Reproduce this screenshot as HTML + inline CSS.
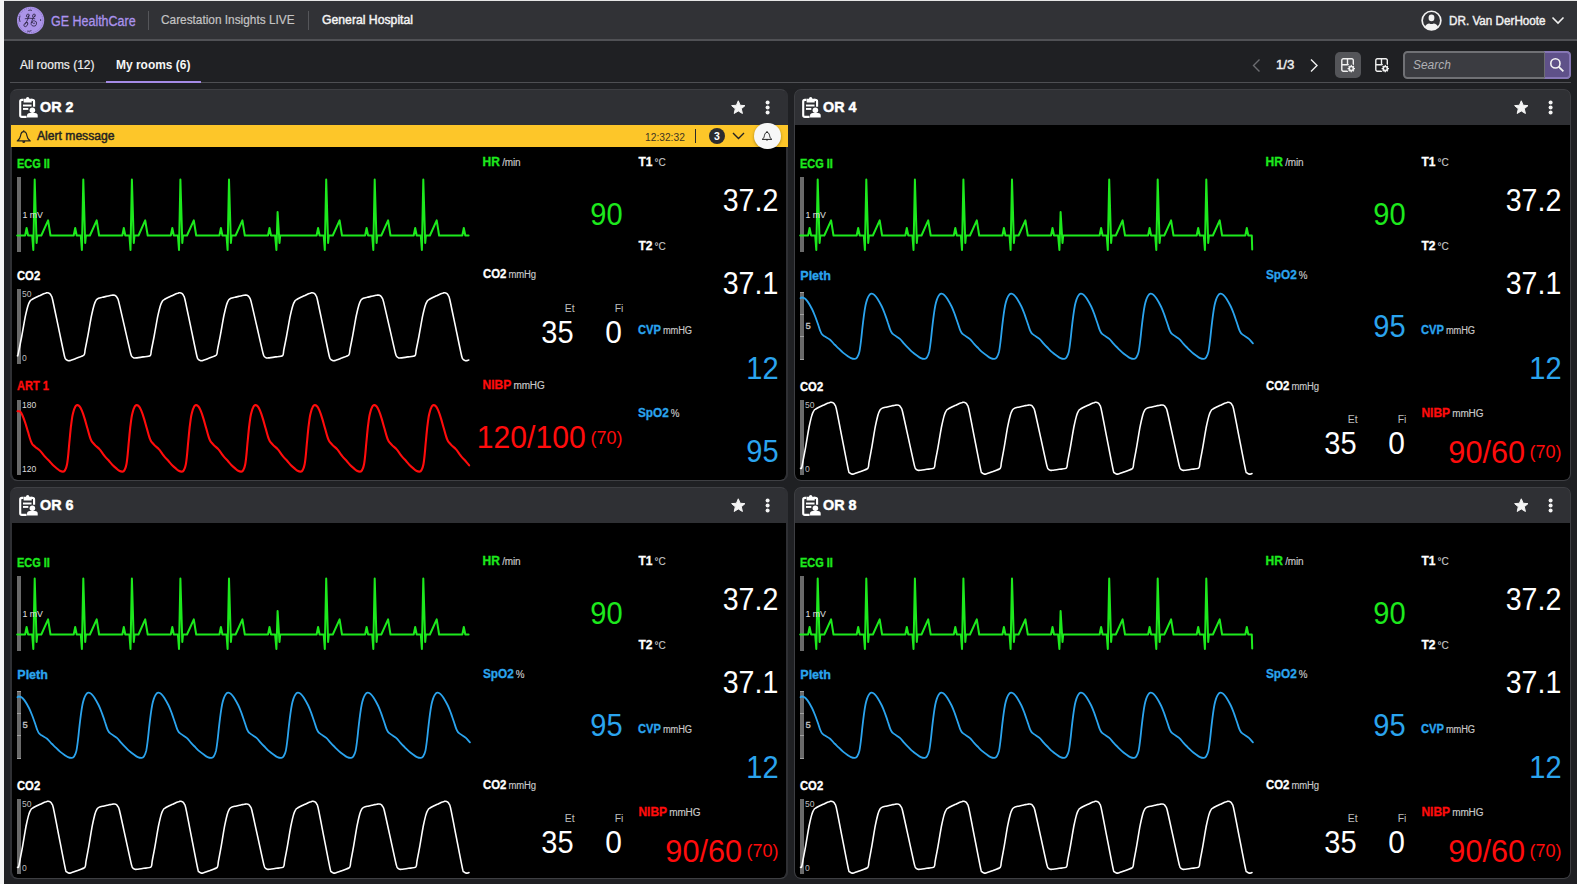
<!DOCTYPE html>
<html><head><meta charset="utf-8"><title>Carestation Insights LIVE</title><style>
*{margin:0;padding:0;box-sizing:border-box}
html,body{width:1577px;height:884px;overflow:hidden;background:#1f2023;font-family:"Liberation Sans",sans-serif}
.t{position:absolute;line-height:1;white-space:nowrap}
.u{font-weight:normal;font-size:10px;color:#c8c8c8;margin-left:2.2px;letter-spacing:-0.15px;-webkit-text-stroke:0.15px #c8c8c8}
#strip{position:absolute;left:0;top:0;width:4px;height:884px;background:#f4f4f4}
#topstrip{position:absolute;left:0;top:0;width:1577px;height:1px;background:#e6e6e6}
#hdr{position:absolute;left:4px;top:1px;width:1573px;height:40px;background:#313236;border-bottom:2px solid #505155}
.card{position:absolute;width:777px;height:392px;background:#2f3034;border-radius:7px;overflow:hidden}
.card .body{position:absolute;left:1px;top:36px;right:1px;bottom:1px;background:#000;border-radius:0 0 6px 6px}
.card .bd{position:absolute;left:0;top:0;right:0;bottom:0;border:1px solid #3e3f43;border-radius:7px}
.c1{width:778px!important}
.c1 .body{left:2px;right:2px}
.c1 .bd{border-left:2px solid #2f3034;border-right:2px solid #2f3034}
.c1 .alert{left:0.5px;right:0.5px}
.alert{position:absolute;left:1px;right:1px;top:36px;height:22px;background:#fdc629}
.badge{position:absolute;left:699px;top:39.2px;width:16px;height:16px;border-radius:50%;background:#2b2b2f;color:#fff;font-size:10.5px;font-weight:bold;text-align:center;line-height:16px}
.bellbtn{position:absolute;left:744.2px;top:33.7px;width:26.6px;height:26.6px;border-radius:50%;background:#f7f7f7;box-shadow:0 1px 3px rgba(0,0,0,.35)}
.wv{position:absolute;overflow:visible}
.sb{position:absolute;width:4px;background:#6a6a6a}
.tk{position:absolute;width:4px;height:1.2px;background:#a0a0a0}
</style></head>
<body>
<svg width="0" height="0" style="position:absolute"><defs>
<path id="wEcg" d="M0.2 58.5 8.1 58.5 9.6 51 11.1 58.5 15.2 58.5 16.3 73 17.7 2.5 19.6 66 20.3 58.5 24.3 58.5 31.1 43.3 33.5 58.5 56.7 58.5 58.2 51 59.7 58.5 63.8 58.5 64.9 73 66.3 2.5 68.2 66 68.9 58.5 72.9 58.5 79.7 43.3 82.1 58.5 105.3 58.5 106.8 51 108.3 58.5 112.4 58.5 113.5 73 114.9 2.5 116.8 66 117.5 58.5 121.5 58.5 128.2 43.3 130.7 58.5 153.8 58.5 155.3 51 156.8 58.5 160.9 58.5 162 73 163.4 2.5 165.3 66 166 58.5 170 58.5 176.8 43.3 179.2 58.5 202.4 58.5 203.9 51 205.4 58.5 209.5 58.5 210.6 73 212 2.5 213.9 66 214.6 58.5 218.6 58.5 225.4 43.3 227.8 58.5 251 58.5 252.5 51 254 58.5 258.1 58.5 259.4 73 260.6 35 262.5 66 263.2 58.5 299.6 58.5 301.1 51 302.6 58.5 306.7 58.5 307.8 73 309.2 2.5 311.1 66 311.8 58.5 315.8 58.5 322.6 43.3 325 58.5 348.1 58.5 349.6 51 351.1 58.5 355.2 58.5 356.3 73 357.7 2.5 359.6 66 360.3 58.5 364.3 58.5 371.1 43.3 373.5 58.5 396.7 58.5 398.2 51 399.7 58.5 403.8 58.5 404.9 73 406.3 2.5 408.2 66 408.9 58.5 412.9 58.5 419.7 43.3 422.1 58.5 445.3 58.5 446.8 51 448.3 58.5 451.6 58.5"/>
<path id="wEcg2" d="M0.2 58.5 8.1 58.5 9.6 51 11.1 58.5 15.2 58.5 16.3 73 17.7 2.5 19.6 66 20.3 58.5 24.3 58.5 31.1 43.3 33.5 58.5 56.7 58.5 58.2 51 59.7 58.5 63.8 58.5 64.9 73 66.3 2.5 68.2 66 68.9 58.5 72.9 58.5 79.7 43.3 82.1 58.5 105.3 58.5 106.8 51 108.3 58.5 112.4 58.5 113.5 73 114.9 2.5 116.8 66 117.5 58.5 121.5 58.5 128.2 43.3 130.7 58.5 153.8 58.5 155.3 51 156.8 58.5 160.9 58.5 162 73 163.4 2.5 165.3 66 166 58.5 170 58.5 176.8 43.3 179.2 58.5 202.4 58.5 203.9 51 205.4 58.5 209.5 58.5 210.6 73 212 2.5 213.9 66 214.6 58.5 218.6 58.5 225.4 43.3 227.8 58.5 251 58.5 252.5 51 254 58.5 258.1 58.5 259.4 73 260.6 35 262.5 66 263.2 58.5 299.6 58.5 301.1 51 302.6 58.5 306.7 58.5 307.8 73 309.2 2.5 311.1 66 311.8 58.5 315.8 58.5 322.6 43.3 325 58.5 348.1 58.5 349.6 51 351.1 58.5 355.2 58.5 356.3 73 357.7 2.5 359.6 66 360.3 58.5 364.3 58.5 371.1 43.3 373.5 58.5 396.7 58.5 398.2 51 399.7 58.5 403.8 58.5 404.9 73 406.3 2.5 408.2 66 408.9 58.5 412.9 58.5 419.7 43.3 422.1 58.5 445.3 58.5 446.8 51 448.3 58.5 451.8 58.5 452.2 72.5"/>
<path id="wCo2" d="M0.5 66.7C0.5 66.6 0.6 67.4 0.8 66.6C1 65.8 1.5 63.5 2 61C2.5 58.4 4.1 50.7 4.7 47.5C5.3 44.2 6.1 39.5 6.6 36.8C7.1 34 7.9 29.3 8.5 26.6C9.1 24 10.3 19 10.9 17.1C11.5 15.1 12.5 12.9 13.1 12C13.7 11.1 14.5 10.8 15.3 10.3C16.1 9.8 18.1 8.8 19.1 8.3C20.1 7.8 22.2 6.9 23.1 6.5C24 6 25.4 5.3 26.1 5C26.8 4.7 27.8 4.3 28.3 4.2C28.8 4 29.2 3.9 29.5 3.8C29.8 3.7 30 3.7 30.3 3.7C30.6 3.7 31.3 3.8 31.6 4C31.9 4.1 32.6 4.4 32.9 4.8C33.2 5.2 33.9 6 34.2 6.7C34.5 7.4 34.5 5.9 35.5 10.2C36.5 14.5 39.9 31.1 41.5 38.7C43.1 46.3 46.5 63 47.5 67.2C48.5 71.4 48.4 69.7 48.8 70.3C49.2 70.9 50.3 71.4 50.8 71.6C51.3 71.8 51.6 71.9 52.8 71.6C54 71.3 57.9 69.8 59.8 69.1C61.7 68.3 65.9 67.2 67 66C68.1 64.8 67.7 62.9 68.2 60.3C68.7 57.7 70.3 49.9 70.9 46.7C71.5 43.4 72.3 38.7 72.8 35.9C73.3 33.1 74.1 28.3 74.7 25.7C75.3 23 76.5 18 77.1 16C77.7 14 78.7 11.8 79.3 10.9C79.9 10 80.7 9.6 81.5 9.2C82.3 8.8 84.3 8.5 85.3 8.3C86.3 8 88.4 7.6 89.3 7.4C90.2 7.2 91.6 6.9 92.3 6.7C93 6.6 94 6.4 94.5 6.3C95 6.2 95.4 6.2 95.7 6.1C96 6.1 96.2 6.1 96.5 6.1C96.8 6.1 97.5 6.2 97.8 6.3C98.1 6.5 98.8 6.8 99.1 7.2C99.4 7.6 100.1 8.4 100.4 9.1C100.7 9.8 100.7 8.7 101.7 12.6C102.7 16.5 106.1 31.6 107.7 38.5C109.3 45.5 112.7 60.6 113.7 64.5C114.7 68.4 114.6 67 115 67.6C115.4 68.2 116.5 68.7 117 68.9C117.5 69.1 117.8 69 119 68.9C120.2 68.8 124.1 68.2 126 67.9C127.9 67.6 132.1 67.5 133.2 66.6C134.3 65.7 133.9 63.5 134.4 61C134.9 58.4 136.5 50.7 137.1 47.5C137.7 44.2 138.5 39.5 139 36.8C139.5 34 140.3 29.3 140.9 26.6C141.5 24 142.7 19 143.3 17.1C143.9 15.1 144.9 12.9 145.5 12C146.1 11.1 146.9 10.8 147.7 10.3C148.5 9.8 150.5 8.8 151.5 8.3C152.5 7.8 154.6 6.9 155.5 6.5C156.4 6 157.8 5.3 158.5 5C159.2 4.7 160.2 4.3 160.7 4.2C161.2 4 161.6 3.9 161.9 3.8C162.2 3.7 162.4 3.7 162.7 3.7C163 3.7 163.7 3.8 164 4C164.3 4.1 165 4.4 165.3 4.8C165.6 5.2 166.3 6 166.6 6.7C166.9 7.4 166.9 5.9 167.9 10.2C168.9 14.5 172.3 31.1 173.9 38.7C175.5 46.3 178.9 63 179.9 67.2C180.9 71.4 180.8 69.7 181.2 70.3C181.6 70.9 182.7 71.4 183.2 71.6C183.7 71.8 184 71.9 185.2 71.6C186.4 71.3 190.3 69.8 192.2 69.1C194.1 68.3 198.3 67.2 199.4 66C200.5 64.8 200.1 62.9 200.6 60.3C201.1 57.7 202.7 49.9 203.3 46.7C203.9 43.4 204.7 38.7 205.2 35.9C205.7 33.1 206.5 28.3 207.1 25.7C207.7 23 208.9 18 209.5 16C210.1 14 211.1 11.8 211.7 10.9C212.3 10 213.1 9.6 213.9 9.2C214.7 8.8 216.7 8.5 217.7 8.3C218.7 8 220.8 7.6 221.7 7.4C222.6 7.2 224 6.9 224.7 6.7C225.4 6.6 226.4 6.4 226.9 6.3C227.4 6.2 227.8 6.2 228.1 6.1C228.4 6.1 228.6 6.1 228.9 6.1C229.2 6.1 229.9 6.2 230.2 6.3C230.5 6.5 231.2 6.8 231.5 7.2C231.8 7.6 232.5 8.4 232.8 9.1C233.1 9.8 233.1 8.7 234.1 12.6C235.1 16.5 238.5 31.6 240.1 38.5C241.7 45.5 245.1 60.6 246.1 64.5C247.1 68.4 247 67 247.4 67.6C247.8 68.2 248.9 68.7 249.4 68.9C249.9 69.1 250.2 69 251.4 68.9C252.6 68.8 256.5 68.2 258.4 67.9C260.3 67.6 264.5 67.5 265.6 66.6C266.7 65.7 266.3 63.5 266.8 61C267.3 58.4 268.9 50.7 269.5 47.5C270.1 44.2 270.9 39.5 271.4 36.8C271.9 34 272.7 29.3 273.3 26.6C273.9 24 275.1 19 275.7 17.1C276.3 15.1 277.3 12.9 277.9 12C278.5 11.1 279.3 10.8 280.1 10.3C280.9 9.8 282.9 8.8 283.9 8.3C284.9 7.8 287 6.9 287.9 6.5C288.8 6 290.2 5.3 290.9 5C291.6 4.7 292.6 4.3 293.1 4.2C293.6 4 294 3.9 294.3 3.8C294.6 3.7 294.8 3.7 295.1 3.7C295.4 3.7 296.1 3.8 296.4 4C296.7 4.1 297.4 4.4 297.7 4.8C298 5.2 298.7 6 299 6.7C299.3 7.4 299.3 5.9 300.3 10.2C301.3 14.5 304.7 31.1 306.3 38.7C307.9 46.3 311.3 63 312.3 67.2C313.3 71.4 313.2 69.7 313.6 70.3C314 70.9 315.1 71.4 315.6 71.6C316.1 71.8 316.4 71.9 317.6 71.6C318.8 71.3 322.7 69.8 324.6 69.1C326.5 68.3 330.7 67.2 331.8 66C332.9 64.8 332.5 62.9 333 60.3C333.5 57.7 335.1 49.9 335.7 46.7C336.3 43.4 337.1 38.7 337.6 35.9C338.1 33.1 338.9 28.3 339.5 25.7C340.1 23 341.3 18 341.9 16C342.5 14 343.5 11.8 344.1 10.9C344.7 10 345.5 9.6 346.3 9.2C347.1 8.8 349.1 8.5 350.1 8.3C351.1 8 353.2 7.6 354.1 7.4C355 7.2 356.4 6.9 357.1 6.7C357.8 6.6 358.8 6.4 359.3 6.3C359.8 6.2 360.2 6.2 360.5 6.1C360.8 6.1 361 6.1 361.3 6.1C361.6 6.1 362.3 6.2 362.6 6.3C362.9 6.5 363.6 6.8 363.9 7.2C364.2 7.6 364.9 8.4 365.2 9.1C365.5 9.8 365.5 8.7 366.5 12.6C367.5 16.5 370.9 31.6 372.5 38.5C374.1 45.5 377.5 60.6 378.5 64.5C379.5 68.4 379.4 67 379.8 67.6C380.2 68.2 381.3 68.7 381.8 68.9C382.3 69.1 382.6 69 383.8 68.9C385 68.8 388.9 68.2 390.8 67.9C392.7 67.6 396.9 67.5 398 66.6C399.1 65.7 398.7 63.5 399.2 61C399.7 58.4 401.3 50.7 401.9 47.5C402.5 44.2 403.3 39.5 403.8 36.8C404.3 34 405.1 29.3 405.7 26.6C406.3 24 407.5 19 408.1 17.1C408.7 15.1 409.7 12.9 410.3 12C410.9 11.1 411.7 10.8 412.5 10.3C413.3 9.8 415.3 8.8 416.3 8.3C417.3 7.8 419.4 6.9 420.3 6.5C421.2 6 422.6 5.3 423.3 5C424 4.7 425 4.3 425.5 4.2C426 4 426.4 3.9 426.7 3.8C427 3.7 427.2 3.7 427.5 3.7C427.8 3.7 428.5 3.8 428.8 4C429.1 4.1 429.8 4.4 430.1 4.8C430.4 5.2 431.1 6 431.4 6.7C431.7 7.4 431.7 5.9 432.7 10.2C433.7 14.5 437.1 31.1 438.7 38.7C440.3 46.3 443.7 63 444.7 67.2C445.7 71.4 445.6 69.7 446 70.3C446.4 70.9 447.5 71.4 448 71.6C448.5 71.8 449.5 71.7 450 71.6C450.5 71.5 451.6 71 451.8 71"/>
<path id="wArt" d="M0.5 11.3C0.6 11.3 0.6 10.9 1 11C1.4 11 2.4 10.9 3.1 11.6C3.9 12.4 4.5 13.3 5.4 15.2C6.3 17.1 7.5 20.4 8.4 23.2C9.3 25.9 10.1 29.1 11 31.8C11.8 34.5 12.6 37.6 13.3 39.5C13.9 41.5 14.4 42.6 15 43.6C15.5 44.6 15.8 44.7 16.5 45.4C17.2 46 17.9 46.7 19 47.6C20.2 48.5 21.8 49.3 23.3 50.9C24.8 52.4 26.4 55 28 56.7C29.5 58.5 31.1 59.9 32.5 61.3C33.8 62.7 34.8 64.1 36.1 65.3C37.3 66.5 38.8 67.6 39.9 68.5C41 69.5 41.8 70.3 42.9 70.8C43.9 71.3 45.2 71.7 46.1 71.6C47 71.5 47.4 71.3 48.1 70.1C48.7 68.9 49.5 67.3 50 64.5C50.6 61.7 51 57.3 51.4 53.2C51.8 49.2 52.1 44.4 52.6 40C53 35.6 53.5 30.5 53.9 26.7C54.4 22.9 54.8 19.7 55.2 17.1C55.6 14.6 56.1 13 56.5 11.4C56.9 9.9 57.3 8.8 57.8 7.8C58.2 6.9 58.6 6.2 59 5.7C59.5 5.2 59.8 5 60.4 5.1C61 5.2 61.8 5.4 62.5 6.3C63.3 7.2 63.9 8.3 64.8 10.4C65.7 12.5 66.9 16.1 67.8 19.1C68.7 22 69.5 25.4 70.4 28.2C71.2 31.1 72 34.3 72.7 36.4C73.3 38.5 73.8 39.7 74.4 40.8C74.9 41.9 75.2 42.1 75.9 42.8C76.6 43.6 77.3 44.4 78.4 45.5C79.6 46.6 81.2 47.6 82.7 49.4C84.2 51.1 85.8 53.9 87.4 55.8C88.9 57.7 90.5 59.3 91.9 60.8C93.2 62.3 94.2 63.7 95.5 65C96.7 66.2 98.2 67.5 99.3 68.4C100.4 69.4 101.2 70.3 102.3 70.8C103.3 71.3 104.6 71.7 105.5 71.6C106.4 71.5 106.8 71.3 107.5 70.1C108.1 68.9 108.9 67.3 109.4 64.5C110 61.7 110.4 57.3 110.8 53.2C111.2 49.2 111.5 44.4 112 40C112.4 35.6 112.9 30.5 113.3 26.7C113.8 22.9 114.2 19.7 114.6 17.1C115 14.6 115.5 13 115.9 11.4C116.3 9.9 116.7 8.8 117.2 7.8C117.6 6.9 118 6.2 118.4 5.7C118.9 5.2 119.2 5 119.8 5.1C120.4 5.2 121.2 5.4 121.9 6.3C122.7 7.2 123.3 8.3 124.2 10.4C125.1 12.5 126.3 16.1 127.2 19.1C128.1 22 128.9 25.4 129.8 28.2C130.6 31.1 131.4 34.3 132.1 36.4C132.7 38.5 133.2 39.7 133.8 40.8C134.3 41.9 134.6 42.1 135.3 42.8C136 43.6 136.7 44.4 137.8 45.5C139 46.6 140.6 47.6 142.1 49.4C143.6 51.1 145.2 53.9 146.8 55.8C148.3 57.7 149.9 59.3 151.3 60.8C152.6 62.3 153.6 63.7 154.9 65C156.1 66.2 157.6 67.5 158.7 68.4C159.8 69.4 160.6 70.3 161.7 70.8C162.7 71.3 164 71.7 164.9 71.6C165.8 71.5 166.2 71.3 166.9 70.1C167.5 68.9 168.3 67.3 168.8 64.5C169.4 61.7 169.8 57.3 170.2 53.2C170.6 49.2 170.9 44.4 171.4 40C171.8 35.6 172.3 30.5 172.7 26.7C173.2 22.9 173.6 19.7 174 17.1C174.4 14.6 174.9 13 175.3 11.4C175.7 9.9 176.1 8.8 176.6 7.8C177 6.9 177.4 6.2 177.8 5.7C178.3 5.2 178.6 5 179.2 5.1C179.8 5.2 180.6 5.4 181.3 6.3C182.1 7.2 182.7 8.3 183.6 10.4C184.5 12.5 185.7 16.1 186.6 19.1C187.5 22 188.3 25.4 189.2 28.2C190 31.1 190.8 34.3 191.5 36.4C192.1 38.5 192.6 39.7 193.2 40.8C193.7 41.9 194 42.1 194.7 42.8C195.4 43.6 196.1 44.4 197.2 45.5C198.4 46.6 200 47.6 201.5 49.4C203 51.1 204.6 53.9 206.2 55.8C207.7 57.7 209.3 59.3 210.7 60.8C212 62.3 213 63.7 214.3 65C215.5 66.2 217 67.5 218.1 68.4C219.2 69.4 220 70.3 221.1 70.8C222.1 71.3 223.4 71.7 224.3 71.6C225.2 71.5 225.6 71.3 226.3 70.1C226.9 68.9 227.7 67.3 228.2 64.5C228.8 61.7 229.2 57.3 229.6 53.2C230 49.2 230.3 44.4 230.8 40C231.2 35.6 231.7 30.5 232.1 26.7C232.6 22.9 233 19.7 233.4 17.1C233.8 14.6 234.3 13 234.7 11.4C235.1 9.9 235.5 8.8 236 7.8C236.4 6.9 236.8 6.2 237.2 5.7C237.7 5.2 238 5 238.6 5.1C239.2 5.2 240 5.4 240.7 6.3C241.5 7.2 242.1 8.3 243 10.4C243.9 12.5 245.1 16.1 246 19.1C246.9 22 247.7 25.4 248.6 28.2C249.4 31.1 250.2 34.3 250.9 36.4C251.5 38.5 252 39.7 252.6 40.8C253.1 41.9 253.4 42.1 254.1 42.8C254.8 43.6 255.5 44.4 256.6 45.5C257.8 46.6 259.4 47.6 260.9 49.4C262.4 51.1 264 53.9 265.6 55.8C267.1 57.7 268.7 59.3 270.1 60.8C271.4 62.3 272.4 63.7 273.7 65C274.9 66.2 276.4 67.5 277.5 68.4C278.6 69.4 279.4 70.3 280.5 70.8C281.5 71.3 282.8 71.7 283.7 71.6C284.6 71.5 285 71.3 285.7 70.1C286.3 68.9 287.1 67.3 287.6 64.5C288.2 61.7 288.6 57.3 289 53.2C289.4 49.2 289.7 44.4 290.2 40C290.6 35.6 291.1 30.5 291.5 26.7C292 22.9 292.4 19.7 292.8 17.1C293.2 14.6 293.7 13 294.1 11.4C294.5 9.9 294.9 8.8 295.4 7.8C295.8 6.9 296.2 6.2 296.6 5.7C297.1 5.2 297.4 5 298 5.1C298.6 5.2 299.4 5.4 300.1 6.3C300.9 7.2 301.5 8.3 302.4 10.4C303.3 12.5 304.5 16.1 305.4 19.1C306.3 22 307.1 25.4 308 28.2C308.8 31.1 309.6 34.3 310.3 36.4C310.9 38.5 311.4 39.7 312 40.8C312.5 41.9 312.8 42.1 313.5 42.8C314.2 43.6 314.9 44.4 316 45.5C317.2 46.6 318.8 47.6 320.3 49.4C321.8 51.1 323.4 53.9 325 55.8C326.5 57.7 328.1 59.3 329.5 60.8C330.8 62.3 331.8 63.7 333.1 65C334.3 66.2 335.8 67.5 336.9 68.4C338 69.4 338.8 70.3 339.9 70.8C340.9 71.3 342.2 71.7 343.1 71.6C344 71.5 344.4 71.3 345.1 70.1C345.7 68.9 346.5 67.3 347 64.5C347.6 61.7 348 57.3 348.4 53.2C348.8 49.2 349.1 44.4 349.6 40C350 35.6 350.5 30.5 350.9 26.7C351.4 22.9 351.8 19.7 352.2 17.1C352.6 14.6 353.1 13 353.5 11.4C353.9 9.9 354.3 8.8 354.8 7.8C355.2 6.9 355.6 6.2 356 5.7C356.5 5.2 356.8 5 357.4 5.1C358 5.2 358.8 5.4 359.5 6.3C360.3 7.2 360.9 8.3 361.8 10.4C362.7 12.5 363.9 16.1 364.8 19.1C365.7 22 366.5 25.4 367.4 28.2C368.2 31.1 369 34.3 369.7 36.4C370.3 38.5 370.8 39.7 371.4 40.8C371.9 41.9 372.2 42.1 372.9 42.8C373.6 43.6 374.3 44.4 375.4 45.5C376.6 46.6 378.2 47.6 379.7 49.4C381.2 51.1 382.8 53.9 384.4 55.8C385.9 57.7 387.5 59.3 388.9 60.8C390.2 62.3 391.2 63.7 392.5 65C393.7 66.2 395.2 67.5 396.3 68.4C397.4 69.4 398.2 70.3 399.3 70.8C400.3 71.3 401.6 71.7 402.5 71.6C403.4 71.5 403.8 71.3 404.5 70.1C405.1 68.9 405.9 67.3 406.4 64.5C407 61.7 407.4 57.3 407.8 53.2C408.2 49.2 408.5 44.4 409 40C409.4 35.6 409.9 30.5 410.3 26.7C410.8 22.9 411.2 19.7 411.6 17.1C412 14.6 412.5 13 412.9 11.4C413.3 9.9 413.7 8.8 414.2 7.8C414.6 6.9 415 6.2 415.4 5.7C415.9 5.2 416.2 5 416.8 5.1C417.4 5.2 418.2 5.4 418.9 6.3C419.7 7.2 420.3 8.3 421.2 10.4C422.1 12.5 423.3 16.1 424.2 19.1C425.1 22 425.9 25.4 426.8 28.2C427.6 31.1 428.4 34.3 429.1 36.4C429.7 38.5 430.2 39.7 430.8 40.8C431.3 41.9 431.6 42.1 432.3 42.8C433 43.6 433.7 44.4 434.8 45.5C436 46.6 437.6 47.6 439.1 49.4C440.6 51.1 442.2 53.9 443.8 55.8C445.3 57.7 446.9 59.3 448.3 60.8C449.6 62.3 451.2 64.3 451.9 65C452.5 65.7 452 65.1 452 65.1"/>
<path id="wPl" d="M0.5 6.2C0.7 6.1 1.1 5.5 1.8 5.5C2.5 5.5 3.6 5.7 4.5 6.3C5.5 7 6.2 7.7 7.5 9.4C8.8 11.2 10.7 14.5 12 17C13.3 19.5 14.2 21.9 15.2 24.5C16.2 27.1 17.2 30.1 18.1 32.5C19 34.9 19.6 37.3 20.3 39C21 40.7 21.4 41.6 22.2 42.5C23 43.5 23.7 43.7 25 44.6C26.3 45.5 28.5 46.4 30.1 47.7C31.7 49 33 51 34.5 52.5C36 53.9 37.4 55.3 38.8 56.6C40.2 58 41.5 59.4 43 60.6C44.5 61.8 46.2 63 47.5 63.9C48.8 64.8 49.8 65.6 51 66.1C52.2 66.6 53.8 67 54.8 66.9C55.8 66.8 56.3 66.6 57.1 65.4C57.9 64.2 58.8 62.7 59.4 59.9C60 57.2 60.5 52.9 61 48.9C61.5 44.9 61.9 40.2 62.4 35.9C62.9 31.6 63.5 26.6 64 22.9C64.5 19.2 65 16 65.5 13.5C66 11 66.5 9.4 67 7.9C67.5 6.4 68 5.3 68.5 4.4C69 3.5 69.5 2.8 70 2.3C70.5 1.9 70.9 1.6 71.6 1.7C72.3 1.8 73.3 2.1 74.3 2.9C75.2 3.7 76 4.5 77.3 6.4C78.5 8.3 80.5 11.8 81.8 14.5C83.1 17.2 84 19.7 85 22.4C86 25.1 87.1 28.2 87.9 30.7C88.8 33.2 89.4 35.7 90.1 37.4C90.8 39.1 91.2 40.1 92 41.1C92.8 42.1 93.5 42.4 94.8 43.4C96.1 44.4 98.3 45.5 99.9 46.9C101.5 48.3 102.8 50.3 104.3 51.9C105.8 53.5 107.2 54.9 108.6 56.3C110 57.7 111.3 59.2 112.8 60.4C114.2 61.7 116 62.9 117.3 63.8C118.6 64.8 119.6 65.6 120.8 66.1C122 66.6 123.6 67 124.6 66.9C125.6 66.8 126.1 66.6 126.9 65.4C127.7 64.2 128.5 62.7 129.2 59.9C129.8 57.2 130.3 52.9 130.8 48.9C131.3 44.9 131.7 40.2 132.2 35.9C132.7 31.6 133.3 26.6 133.8 22.9C134.3 19.2 134.8 16 135.3 13.5C135.8 11 136.3 9.4 136.8 7.9C137.3 6.4 137.8 5.3 138.3 4.4C138.8 3.5 139.3 2.8 139.8 2.3C140.3 1.9 140.7 1.6 141.4 1.7C142.1 1.8 143.2 2.1 144.1 2.9C145 3.7 145.8 4.5 147.1 6.4C148.3 8.3 150.3 11.8 151.6 14.5C152.9 17.2 153.8 19.7 154.8 22.4C155.8 25.1 156.8 28.2 157.7 30.7C158.5 33.2 159.2 35.7 159.9 37.4C160.6 39.1 161 40.1 161.8 41.1C162.6 42.1 163.3 42.4 164.6 43.4C165.9 44.4 168.1 45.5 169.7 46.9C171.3 48.3 172.7 50.3 174.1 51.9C175.5 53.5 177 54.9 178.4 56.3C179.8 57.7 181.1 59.2 182.6 60.4C184.1 61.7 185.8 62.9 187.1 63.8C188.4 64.8 189.4 65.6 190.6 66.1C191.8 66.6 193.4 67 194.4 66.9C195.4 66.8 195.9 66.6 196.7 65.4C197.5 64.2 198.3 62.7 199 59.9C199.6 57.2 200.1 52.9 200.6 48.9C201.1 44.9 201.5 40.2 202 35.9C202.5 31.6 203.1 26.6 203.6 22.9C204.1 19.2 204.6 16 205.1 13.5C205.6 11 206.1 9.4 206.6 7.9C207.1 6.4 207.6 5.3 208.1 4.4C208.6 3.5 209.1 2.8 209.6 2.3C210.1 1.9 210.5 1.6 211.2 1.7C211.9 1.8 212.9 2.1 213.9 2.9C214.8 3.7 215.6 4.5 216.9 6.4C218.1 8.3 220.1 11.8 221.4 14.5C222.7 17.2 223.6 19.7 224.6 22.4C225.6 25.1 226.6 28.2 227.5 30.7C228.3 33.2 229 35.7 229.7 37.4C230.4 39.1 230.8 40.1 231.6 41.1C232.4 42.1 233.1 42.4 234.4 43.4C235.7 44.4 237.9 45.5 239.5 46.9C241.1 48.3 242.4 50.3 243.9 51.9C245.3 53.5 246.8 54.9 248.2 56.3C249.6 57.7 250.9 59.2 252.4 60.4C253.8 61.7 255.6 62.9 256.9 63.8C258.2 64.8 259.2 65.6 260.4 66.1C261.6 66.6 263.2 67 264.2 66.9C265.2 66.8 265.7 66.6 266.5 65.4C267.3 64.2 268.2 62.7 268.8 59.9C269.4 57.2 269.9 52.9 270.4 48.9C270.9 44.9 271.3 40.2 271.8 35.9C272.3 31.6 272.9 26.6 273.4 22.9C273.9 19.2 274.4 16 274.9 13.5C275.4 11 275.9 9.4 276.4 7.9C276.9 6.4 277.4 5.3 277.9 4.4C278.4 3.5 278.9 2.8 279.4 2.3C279.9 1.9 280.3 1.6 281 1.7C281.7 1.8 282.8 2.1 283.7 2.9C284.6 3.7 285.4 4.5 286.7 6.4C287.9 8.3 289.9 11.8 291.2 14.5C292.5 17.2 293.4 19.7 294.4 22.4C295.4 25.1 296.4 28.2 297.3 30.7C298.2 33.2 298.8 35.7 299.5 37.4C300.2 39.1 300.6 40.1 301.4 41.1C302.2 42.1 302.9 42.4 304.2 43.4C305.5 44.4 307.7 45.5 309.3 46.9C310.9 48.3 312.2 50.3 313.7 51.9C315.1 53.5 316.6 54.9 318 56.3C319.4 57.7 320.8 59.2 322.2 60.4C323.6 61.7 325.4 62.9 326.7 63.8C328 64.8 329 65.6 330.2 66.1C331.4 66.6 333 67 334 66.9C335 66.8 335.5 66.6 336.3 65.4C337.1 64.2 338 62.7 338.6 59.9C339.2 57.2 339.7 52.9 340.2 48.9C340.7 44.9 341.1 40.2 341.6 35.9C342.1 31.6 342.7 26.6 343.2 22.9C343.7 19.2 344.2 16 344.7 13.5C345.2 11 345.7 9.4 346.2 7.9C346.7 6.4 347.2 5.3 347.7 4.4C348.2 3.5 348.7 2.8 349.2 2.3C349.7 1.9 350.1 1.6 350.8 1.7C351.5 1.8 352.6 2.1 353.5 2.9C354.4 3.7 355.2 4.5 356.5 6.4C357.8 8.3 359.7 11.8 361 14.5C362.3 17.2 363.2 19.7 364.2 22.4C365.2 25.1 366.2 28.2 367.1 30.7C368 33.2 368.6 35.7 369.3 37.4C370 39.1 370.4 40.1 371.2 41.1C372 42.1 372.7 42.4 374 43.4C375.3 44.4 377.5 45.5 379.1 46.9C380.7 48.3 382.1 50.3 383.5 51.9C384.9 53.5 386.4 54.9 387.8 56.3C389.2 57.7 390.6 59.2 392 60.4C393.4 61.7 395.2 62.9 396.5 63.8C397.8 64.8 398.8 65.6 400 66.1C401.2 66.6 402.8 67 403.8 66.9C404.8 66.8 405.3 66.6 406.1 65.4C406.9 64.2 407.8 62.7 408.4 59.9C409 57.2 409.5 52.9 410 48.9C410.5 44.9 410.9 40.2 411.4 35.9C411.9 31.6 412.5 26.6 413 22.9C413.5 19.2 414 16 414.5 13.5C415 11 415.5 9.4 416 7.9C416.5 6.4 417 5.3 417.5 4.4C418 3.5 418.5 2.8 419 2.3C419.5 1.9 419.9 1.6 420.6 1.7C421.3 1.8 422.3 2.1 423.3 2.9C424.2 3.7 425 4.5 426.3 6.4C427.5 8.3 429.5 11.8 430.8 14.5C432.1 17.2 433 19.7 434 22.4C435 25.1 436 28.2 436.9 30.7C437.8 33.2 438.4 35.7 439.1 37.4C439.8 39.1 440.2 40.1 441 41.1C441.8 42.1 442.5 42.4 443.8 43.4C445.1 44.4 447.4 45.6 448.9 46.9C450.4 48.2 452.2 50.7 452.9 51.4"/>
<path id="wCo2b" d="M0.5 68.2C0.6 68.2 1.3 68.8 1.6 68C1.9 67.2 2.3 64.8 2.8 62.1C3.3 59.4 4.9 51.3 5.5 47.9C6.1 44.5 6.9 39.5 7.4 36.6C7.9 33.7 8.7 28.7 9.3 26C9.9 23.2 11.1 18 11.7 15.9C12.3 13.9 13.3 11.5 13.9 10.6C14.5 9.6 15.3 9.3 16.1 8.8C16.9 8.3 18.9 7.3 19.9 6.8C20.9 6.3 23 5.4 23.9 5C24.8 4.5 26.2 3.8 26.9 3.5C27.6 3.2 28.6 2.8 29.1 2.7C29.6 2.5 30 2.4 30.3 2.3C30.6 2.2 30.8 2.2 31.1 2.2C31.4 2.2 32.1 2.3 32.4 2.5C32.7 2.6 33.4 2.9 33.7 3.3C34 3.7 34.7 4.5 35 5.2C35.3 5.9 35.3 4.2 36.3 8.7C37.3 13.2 40.7 31 42.3 39.1C43.9 47.3 47.3 65.1 48.3 69.6C49.3 74.1 49.2 72.1 49.6 72.7C50 73.3 51.1 73.8 51.6 74C52.1 74.2 52.4 74.3 53.6 74C54.8 73.7 58.7 72.2 60.6 71.5C62.5 70.7 66.7 69.6 67.8 68.4C68.9 67.2 68.5 65.1 69 62.4C69.5 59.6 71.1 51.4 71.7 47.9C72.3 44.4 73.1 39.4 73.6 36.4C74.1 33.5 74.9 28.4 75.5 25.6C76.1 22.8 77.3 17.4 77.9 15.3C78.5 13.2 79.5 10.9 80.1 9.9C80.7 8.9 81.5 8.5 82.3 8.1C83.1 7.7 85.1 7.4 86.1 7.2C87.1 6.9 89.2 6.5 90.1 6.3C91 6.1 92.4 5.8 93.1 5.6C93.8 5.5 94.8 5.3 95.3 5.2C95.8 5.1 96.2 5.1 96.5 5C96.8 5 97 5 97.3 5C97.6 5 98.3 5.1 98.6 5.2C98.9 5.4 99.6 5.7 99.9 6.1C100.2 6.5 100.9 7.3 101.2 8C101.5 8.7 101.5 7.4 102.5 11.5C103.5 15.6 106.9 31.4 108.5 38.7C110.1 46 113.5 61.9 114.5 65.9C115.5 69.9 115.4 68.4 115.8 69C116.2 69.6 117.3 70.1 117.8 70.3C118.3 70.5 118.6 70.4 119.8 70.3C121 70.2 124.9 69.6 126.8 69.3C128.7 69 132.9 69 134 68C135.1 67 134.7 64.8 135.2 62.1C135.7 59.4 137.3 51.3 137.9 47.9C138.5 44.5 139.3 39.5 139.8 36.6C140.3 33.7 141.1 28.7 141.7 26C142.3 23.2 143.5 18 144.1 15.9C144.7 13.9 145.7 11.5 146.3 10.6C146.9 9.6 147.7 9.3 148.5 8.8C149.3 8.3 151.3 7.3 152.3 6.8C153.3 6.3 155.4 5.4 156.3 5C157.2 4.5 158.6 3.8 159.3 3.5C160 3.2 161 2.8 161.5 2.7C162 2.5 162.4 2.4 162.7 2.3C163 2.2 163.2 2.2 163.5 2.2C163.8 2.2 164.5 2.3 164.8 2.5C165.1 2.6 165.8 2.9 166.1 3.3C166.4 3.7 167.1 4.5 167.4 5.2C167.7 5.9 167.7 4.2 168.7 8.7C169.7 13.2 173.1 31 174.7 39.1C176.3 47.3 179.7 65.1 180.7 69.6C181.7 74.1 181.6 72.1 182 72.7C182.4 73.3 183.5 73.8 184 74C184.5 74.2 184.8 74.3 186 74C187.2 73.7 191.1 72.2 193 71.5C194.9 70.7 199.1 69.6 200.2 68.4C201.3 67.2 200.9 65.1 201.4 62.4C201.9 59.6 203.5 51.4 204.1 47.9C204.7 44.4 205.5 39.4 206 36.4C206.5 33.5 207.3 28.4 207.9 25.6C208.5 22.8 209.7 17.4 210.3 15.3C210.9 13.2 211.9 10.9 212.5 9.9C213.1 8.9 213.9 8.5 214.7 8.1C215.5 7.7 217.5 7.4 218.5 7.2C219.5 6.9 221.6 6.5 222.5 6.3C223.4 6.1 224.8 5.8 225.5 5.6C226.2 5.5 227.2 5.3 227.7 5.2C228.2 5.1 228.6 5.1 228.9 5C229.2 5 229.4 5 229.7 5C230 5 230.7 5.1 231 5.2C231.3 5.4 232 5.7 232.3 6.1C232.6 6.5 233.3 7.3 233.6 8C233.9 8.7 233.9 7.4 234.9 11.5C235.9 15.6 239.3 31.4 240.9 38.7C242.5 46 245.9 61.9 246.9 65.9C247.9 69.9 247.8 68.4 248.2 69C248.6 69.6 249.7 70.1 250.2 70.3C250.7 70.5 251 70.4 252.2 70.3C253.4 70.2 257.3 69.6 259.2 69.3C261.1 69 265.3 69 266.4 68C267.5 67 267.1 64.8 267.6 62.1C268.1 59.4 269.7 51.3 270.3 47.9C270.9 44.5 271.7 39.5 272.2 36.6C272.7 33.7 273.5 28.7 274.1 26C274.7 23.2 275.9 18 276.5 15.9C277.1 13.9 278.1 11.5 278.7 10.6C279.3 9.6 280.1 9.3 280.9 8.8C281.7 8.3 283.7 7.3 284.7 6.8C285.7 6.3 287.8 5.4 288.7 5C289.6 4.5 291 3.8 291.7 3.5C292.4 3.2 293.4 2.8 293.9 2.7C294.4 2.5 294.8 2.4 295.1 2.3C295.4 2.2 295.6 2.2 295.9 2.2C296.2 2.2 296.9 2.3 297.2 2.5C297.5 2.6 298.2 2.9 298.5 3.3C298.8 3.7 299.5 4.5 299.8 5.2C300.1 5.9 300.1 4.2 301.1 8.7C302.1 13.2 305.5 31 307.1 39.1C308.7 47.3 312.1 65.1 313.1 69.6C314.1 74.1 314 72.1 314.4 72.7C314.8 73.3 315.9 73.8 316.4 74C316.9 74.2 317.2 74.3 318.4 74C319.6 73.7 323.5 72.2 325.4 71.5C327.3 70.7 331.5 69.6 332.6 68.4C333.7 67.2 333.3 65.1 333.8 62.4C334.3 59.6 335.9 51.4 336.5 47.9C337.1 44.4 337.9 39.4 338.4 36.4C338.9 33.5 339.7 28.4 340.3 25.6C340.9 22.8 342.1 17.4 342.7 15.3C343.3 13.2 344.3 10.9 344.9 9.9C345.5 8.9 346.3 8.5 347.1 8.1C347.9 7.7 349.9 7.4 350.9 7.2C351.9 6.9 354 6.5 354.9 6.3C355.8 6.1 357.2 5.8 357.9 5.6C358.6 5.5 359.6 5.3 360.1 5.2C360.6 5.1 361 5.1 361.3 5C361.6 5 361.8 5 362.1 5C362.4 5 363.1 5.1 363.4 5.2C363.7 5.4 364.4 5.7 364.7 6.1C365 6.5 365.7 7.3 366 8C366.3 8.7 366.3 7.4 367.3 11.5C368.3 15.6 371.7 31.4 373.3 38.7C374.9 46 378.3 61.9 379.3 65.9C380.3 69.9 380.2 68.4 380.6 69C381 69.6 382.1 70.1 382.6 70.3C383.1 70.5 383.4 70.4 384.6 70.3C385.8 70.2 389.7 69.6 391.6 69.3C393.5 69 397.7 69 398.8 68C399.9 67 399.5 64.8 400 62.1C400.5 59.4 402.1 51.3 402.7 47.9C403.3 44.5 404.1 39.5 404.6 36.6C405.1 33.7 405.9 28.7 406.5 26C407.1 23.2 408.3 18 408.9 15.9C409.5 13.9 410.5 11.5 411.1 10.6C411.7 9.6 412.5 9.3 413.3 8.8C414.1 8.3 416.1 7.3 417.1 6.8C418.1 6.3 420.2 5.4 421.1 5C422 4.5 423.4 3.8 424.1 3.5C424.8 3.2 425.8 2.8 426.3 2.7C426.8 2.5 427.2 2.4 427.5 2.3C427.8 2.2 428 2.2 428.3 2.2C428.6 2.2 429.3 2.3 429.6 2.5C429.9 2.6 430.6 2.9 430.9 3.3C431.2 3.7 431.9 4.5 432.2 5.2C432.5 5.9 432.5 4.2 433.5 8.7C434.5 13.2 437.9 31 439.5 39.1C441.1 47.3 444.5 65.1 445.5 69.6C446.5 74.1 446.4 72.1 446.8 72.7C447.2 73.3 448.3 73.8 448.8 74C449.3 74.2 450.4 74.1 450.8 74C451.2 73.9 451.8 73.6 452 73.6"/>
<g id="icClip"><path d="M6 3.6H4.6a1.6 1.6 0 0 0-1.6 1.6v12.8a1.6 1.6 0 0 0 1.6 1.6H9" fill="none" stroke="#fff" stroke-width="2"/><path d="M13 3.6h1.4a1.6 1.6 0 0 1 1.6 1.6V10" fill="none" stroke="#fff" stroke-width="2"/><path d="M6.2 2.6h2.2a1.6 1.6 0 0 1 3.2 0h2.2v3.6H6.2z" fill="#fff"/><rect x="5.6" y="8" width="8" height="1.8" fill="#fff"/><rect x="5.6" y="11.2" width="5" height="1.8" fill="#fff"/><circle cx="14.4" cy="13.3" r="2.6" fill="#fff"/><path d="M9.4 20.2v-1.6a2.6 2.6 0 0 1 2.6-2.6h4.8a2.6 2.6 0 0 1 2.6 2.6v1.6z" fill="#fff"/></g>
</defs></svg>
<div id="hdr"></div><div id="topstrip"></div><div id="strip"></div>
<svg class="wv" style="left:16px;top:6px" width="30" height="30" viewBox="0 0 30 30"><circle cx="14.6" cy="14.4" r="13.6" fill="#ab94e9"/><circle cx="14.6" cy="14.4" r="12.3" fill="none" stroke="#5a4a8a" stroke-width="0.5" stroke-dasharray="1 1.2"/><g fill="none" stroke="#2a2140" stroke-width="0.8" stroke-linecap="round"><path d="M12.6 4.3q1.5-.7 3 0M3.9 10q-1.2 3 0 5.6M11.6 25.2q1.7.5 3.5-.4M24.6 13.6v1"/><ellipse cx="11.8" cy="9.6" rx="1.2" ry="1.7" transform="rotate(25 11.8 9.6)"/><path d="M12.8 11.2L9.4 18"/><ellipse cx="9.9" cy="18.5" rx="2.4" ry="1.6" transform="rotate(-50 9.9 18.5)"/><path d="M9.2 12.7q4.5-.9 9.6 0"/><ellipse cx="17.9" cy="9.6" rx="1.2" ry="1.7" transform="rotate(25 17.9 9.6)"/><path d="M17.2 11.3L15.4 16.4"/><path d="M15.4 16.4a2.7 2.7 0 1 0 2.9-1.6 1.4 1.4 0 1 0 .4 2.4"/></g></svg>
<div class="t " style="left:50.5px;top:12.7px;font-size:15.5px;color:#ab92ee;transform:scaleX(0.805);transform-origin:0 0;-webkit-text-stroke:0.3px #ab92ee;">GE HealthCare</div>
<div style="position:absolute;left:148px;top:10.5px;width:1px;height:19.5px;background:#55565a"></div>
<div class="t " style="left:161.4px;top:14.3px;font-size:12.8px;color:#c4c4c4;transform:scaleX(0.925);transform-origin:0 0;-webkit-text-stroke:0.2px #c4c4c4;">Carestation Insights LIVE</div>
<div style="position:absolute;left:308px;top:10.5px;width:1px;height:19.5px;background:#55565a"></div>
<div class="t " style="left:321.6px;top:14.2px;font-size:12.8px;color:#f4f4f4;transform:scaleX(0.955);transform-origin:0 0;-webkit-text-stroke:0.45px #f4f4f4;">General Hospital</div>
<svg class="wv" style="left:1421px;top:10px" width="22" height="22" viewBox="0 0 22 22"><circle cx="10.5" cy="10.6" r="9.35" fill="none" stroke="#f2f2f2" stroke-width="1.7"/><ellipse cx="10.5" cy="7.9" rx="2.9" ry="3.3" fill="#f2f2f2"/><path d="M3.9 16.9C4.6 14.5 6.4 13.6 8.3 13.4Q10.5 14.6 12.7 13.4C14.6 13.6 16.4 14.5 17.1 16.9 15.4 18.5 13.1 19.5 10.5 19.5S5.6 18.5 3.9 16.9z" fill="#f2f2f2"/></svg>
<div class="t " style="left:1448.5px;top:14.6px;font-size:12.5px;color:#f0f0f0;transform:scaleX(0.935);transform-origin:0 0;-webkit-text-stroke:0.45px #f0f0f0;">DR. Van DerHoote</div>
<svg class="wv" style="left:1551px;top:16px" width="14" height="9" viewBox="0 0 14 9"><path d="M1.5 1.5l5.5 5.5 5.5-5.5" fill="none" stroke="#f0f0f0" stroke-width="1.6"/></svg>
<div class="t " style="left:20.0px;top:57.9px;font-size:13.0px;color:#f0f0f0;transform:scaleX(0.920);transform-origin:0 0;-webkit-text-stroke:0.2px #f0f0f0;">All rooms (12)</div>
<div class="t " style="left:115.8px;top:57.9px;font-size:13.0px;color:#f6f6f6;font-weight:bold;transform:scaleX(0.920);transform-origin:0 0;">My rooms (6)</div>
<div style="position:absolute;left:10px;top:82px;width:1561px;height:1px;background:#4e4f53"></div>
<div style="position:absolute;left:105.5px;top:81px;width:95.5px;height:2px;background:#a58be6"></div>
<svg class="wv" style="left:1251px;top:58px" width="11" height="15" viewBox="0 0 11 15"><path d="M8.5 1.5L2.5 7.5l6 6" fill="none" stroke="#6c6d71" stroke-width="1.4"/></svg>
<div class="t " style="left:1276.2px;top:58.6px;font-size:12.5px;color:#f0f0f0;transform:scaleX(1.060);transform-origin:0 0;-webkit-text-stroke:0.4px #f0f0f0;">1/3</div>
<svg class="wv" style="left:1309px;top:58px" width="11" height="15" viewBox="0 0 11 15"><path d="M2 1.5l6 6-6 6" fill="none" stroke="#f0f0f0" stroke-width="1.4"/></svg>
<div style="position:absolute;left:1335px;top:52px;width:26px;height:26px;border-radius:5px;background:#545559"></div>
<svg class="wv" style="left:1341.0px;top:57.6px" width="16" height="16" viewBox="0 0 16 16"><path d="M7.2 13.3H2.3a1.5 1.5 0 0 1-1.5-1.5V2.3A1.5 1.5 0 0 1 2.3.8h8.5a1.5 1.5 0 0 1 1.5 1.5v5.5M6.5.8v6M.8 6.8h7" fill="none" stroke="#f0f0f0" stroke-width="1.4"/><circle cx="10.3" cy="10.6" r="4.4" fill="#545559"/><g fill="#f0f0f0"><rect x="9.7" y="6.9" width="1.2" height="1.4" transform="rotate(0 10.3 10.6)"/><rect x="9.7" y="6.9" width="1.2" height="1.4" transform="rotate(45 10.3 10.6)"/><rect x="9.7" y="6.9" width="1.2" height="1.4" transform="rotate(90 10.3 10.6)"/><rect x="9.7" y="6.9" width="1.2" height="1.4" transform="rotate(135 10.3 10.6)"/><rect x="9.7" y="6.9" width="1.2" height="1.4" transform="rotate(180 10.3 10.6)"/><rect x="9.7" y="6.9" width="1.2" height="1.4" transform="rotate(225 10.3 10.6)"/><rect x="9.7" y="6.9" width="1.2" height="1.4" transform="rotate(270 10.3 10.6)"/><rect x="9.7" y="6.9" width="1.2" height="1.4" transform="rotate(315 10.3 10.6)"/></g><circle cx="10.3" cy="10.6" r="2.1" fill="none" stroke="#f0f0f0" stroke-width="1.7"/></svg>
<svg class="wv" style="left:1375.3px;top:57.6px" width="16" height="16" viewBox="0 0 16 16"><path d="M7.2 13.3H2.3a1.5 1.5 0 0 1-1.5-1.5V2.3A1.5 1.5 0 0 1 2.3.8h8.5a1.5 1.5 0 0 1 1.5 1.5v5.5M6.5.8v6M.8 6.8h7" fill="none" stroke="#f0f0f0" stroke-width="1.4"/><circle cx="10.3" cy="10.6" r="4.4" fill="#1f2023"/><g fill="#f0f0f0"><rect x="9.7" y="6.9" width="1.2" height="1.4" transform="rotate(0 10.3 10.6)"/><rect x="9.7" y="6.9" width="1.2" height="1.4" transform="rotate(45 10.3 10.6)"/><rect x="9.7" y="6.9" width="1.2" height="1.4" transform="rotate(90 10.3 10.6)"/><rect x="9.7" y="6.9" width="1.2" height="1.4" transform="rotate(135 10.3 10.6)"/><rect x="9.7" y="6.9" width="1.2" height="1.4" transform="rotate(180 10.3 10.6)"/><rect x="9.7" y="6.9" width="1.2" height="1.4" transform="rotate(225 10.3 10.6)"/><rect x="9.7" y="6.9" width="1.2" height="1.4" transform="rotate(270 10.3 10.6)"/><rect x="9.7" y="6.9" width="1.2" height="1.4" transform="rotate(315 10.3 10.6)"/></g><circle cx="10.3" cy="10.6" r="2.1" fill="none" stroke="#f0f0f0" stroke-width="1.7"/></svg>
<div style="position:absolute;left:1402.6px;top:51px;width:168.4px;height:27.5px;border-radius:4.5px;background:#3b3c41;border:2px solid #707175"></div>
<div style="position:absolute;left:1543.6px;top:51px;width:27.4px;height:27.5px;border-radius:0 4.5px 4.5px 0;background:#5f5189;border:2px solid #8676b5;border-left:1px solid #6d6e72"></div>
<div class="t " style="left:1412.6px;top:58.5px;font-size:12.5px;color:#b0b1b5;transform:scaleX(0.955);transform-origin:0 0;font-style:italic;">Search</div>
<svg class="wv" style="left:1549px;top:57px" width="16" height="16" viewBox="0 0 16 16"><circle cx="6.4" cy="6.4" r="4.6" fill="none" stroke="#f4f4f4" stroke-width="1.6"/><path d="M9.8 9.8l4.6 4.6" stroke="#f4f4f4" stroke-width="1.8"/></svg>
<div class="card c1" style="left:10.0px;top:89.0px">
<div class="body"></div><div class="bd"></div>
<div style="position:absolute;left:0px;top:0;width:100%;height:100%">
<svg class="wv" style="left:7px;top:7px" width="23.5" height="23.5" viewBox="0 0 22 22"><use href="#icClip"/></svg>
<div class="t " style="left:30.2px;top:10.1px;font-size:15.5px;color:#ffffff;font-weight:bold;transform:scaleX(0.925);transform-origin:0 0;-webkit-text-stroke:0.5px #fff;">OR 2</div>
<svg class="wv" style="left:0;top:0" width="777" height="40"><polygon points="728.30,11.80 730.15,16.25 734.96,16.64 731.30,19.77 732.41,24.46 728.30,21.95 724.19,24.46 725.30,19.77 721.64,16.64 726.45,16.25" fill="#f4f4f4" stroke="#f4f4f4" stroke-width="1" stroke-linejoin="round"/><circle cx="757.6" cy="13.5" r="2" fill="#f4f4f4"/><circle cx="757.6" cy="18.5" r="2" fill="#f4f4f4"/><circle cx="757.6" cy="23.5" r="2" fill="#f4f4f4"/></svg>
<div style="position:absolute;left:0;top:0.0px;width:100%;height:100%">
<div class="t " style="left:6.9px;top:68.6px;font-size:12.5px;color:#1de91d;font-weight:bold;transform:scaleX(0.875);transform-origin:0 0;-webkit-text-stroke:0.35px #1de91d;">ECG II</div>
<div class="sb" style="left:7.0px;top:88.0px;height:75.0px"></div>
<svg class="wv" style="left:7.0px;top:88.0px" width="460" height="90" viewBox="0 0 460 90"><use href="#wEcg" fill="none" stroke="#1de91d" stroke-width="2" stroke-linejoin="round" stroke-linecap="round"/></svg>
<div class="t " style="left:12.4px;top:121.6px;font-size:8.8px;color:#e2e2e2;">1 mV</div>
<div class="t" style="left:628.4px;top:67.2px;font-size:12px;color:#ffffff;font-weight:bold;-webkit-text-stroke:0.3px #ffffff;transform:scaleX(1.000);transform-origin:0 0">T1<span class="u">&deg;C</span></div>
<div class="t" style="right:calc(100% - 768.6px);top:95.2px;font-size:32.0px;color:#ffffff;text-align:right;transform:scaleX(0.893);transform-origin:100% 0;">37.2</div>
<div class="t" style="left:628.4px;top:151.0px;font-size:12px;color:#ffffff;font-weight:bold;-webkit-text-stroke:0.3px #ffffff;transform:scaleX(1.000);transform-origin:0 0">T2<span class="u">&deg;C</span></div>
<div class="t" style="right:calc(100% - 768.6px);top:178.4px;font-size:32.0px;color:#ffffff;text-align:right;transform:scaleX(0.893);transform-origin:100% 0;">37.1</div>
<div class="t" style="left:628.4px;top:235.1px;font-size:12px;color:#2ba4ee;font-weight:bold;-webkit-text-stroke:0.3px #2ba4ee;transform:scaleX(0.930);transform-origin:0 0">CVP<span class="u">mmHG</span></div>
<div class="t" style="right:calc(100% - 768.6px);top:263.2px;font-size:32.0px;color:#2ba4ee;text-align:right;transform:scaleX(0.907);transform-origin:100% 0;">12</div>
<div class="t" style="left:472.6px;top:67.2px;font-size:12px;color:#1de91d;font-weight:bold;-webkit-text-stroke:0.3px #1de91d;transform:scaleX(1.000);transform-origin:0 0">HR<span class="u">/min</span></div>
<div class="t" style="right:calc(100% - 612.6px);top:109.4px;font-size:32.0px;color:#1de91d;text-align:right;transform:scaleX(0.907);transform-origin:100% 0;">90</div>
<div class="alert"></div>
<svg class="wv" style="left:6px;top:39.5px" width="16" height="16" viewBox="0 0 16 16"><path d="M7.75 1.2V2.6M7.75 2.6C5.6 2.6 4.9 4.4 4.6 6.6 4.3 9 3.4 10.6 1.2 11.9H14.3C12.1 10.6 11.2 9 10.9 6.6 10.6 4.4 9.9 2.6 7.75 2.6zM6.6 12.6q1.15 1.4 2.3 0" fill="none" stroke="#222" stroke-width="1.15" stroke-linejoin="round"/></svg>
<div class="t " style="left:27.1px;top:41.3px;font-size:12.0px;color:#222;transform:scaleX(1.010);transform-origin:0 0;-webkit-text-stroke:0.45px #222;">Alert message</div>
<div class="t " style="left:635.4px;top:42.8px;font-size:11.0px;color:#3d3522;transform:scaleX(0.930);transform-origin:0 0;">12:32:32</div>
<div style="position:absolute;left:685.3px;top:40px;width:1.2px;height:14px;background:#2a2a2a"></div>
<div class="badge">3</div>
<svg class="wv" style="left:722px;top:43px" width="13" height="8" viewBox="0 0 13 8"><path d="M1 1l5.5 5.5L12 1" fill="none" stroke="#222" stroke-width="1.4"/></svg>
<div class="bellbtn"><svg width="14" height="14" viewBox="0 0 14 14" style="position:absolute;left:6.3px;top:6.3px"><path d="M2.2 10.4h9.6C10.3 9.4 9.9 8.2 9.6 6.6 9.2 4.6 8.4 3.4 7 3.4S4.8 4.6 4.4 6.6C4.1 8.2 3.7 9.4 2.2 10.4z" fill="none" stroke="#222" stroke-width="1" stroke-linejoin="round"/><path d="M7 2v1.4M6.2 10.8q.8 .9 1.6 0" fill="none" stroke="#222" stroke-width="1"/></svg></div>
<div class="t " style="left:7.1px;top:180.6px;font-size:12.5px;color:#ffffff;font-weight:bold;transform:scaleX(0.900);transform-origin:0 0;-webkit-text-stroke:0.35px #fff;">CO2</div>
<div class="sb" style="left:7.0px;top:200.0px;height:74.7px"></div>
<svg class="wv" style="left:7.0px;top:200.0px" width="460" height="90" viewBox="0 0 460 90"><use href="#wCo2" fill="none" stroke="#ffffff" stroke-width="1.6" stroke-linejoin="round" stroke-linecap="round"/></svg>
<div class="t " style="left:12.2px;top:201.1px;font-size:9.0px;color:#bdbdbd;transform:scaleX(0.950);transform-origin:0 0;">50</div>
<div class="t " style="left:12.2px;top:265.1px;font-size:9.0px;color:#bdbdbd;transform:scaleX(0.950);transform-origin:0 0;">0</div>
<div class="t " style="left:6.9px;top:291.3px;font-size:12.5px;color:#ff0c0c;font-weight:bold;transform:scaleX(0.885);transform-origin:0 0;-webkit-text-stroke:0.35px #ff0c0c;">ART 1</div>
<div class="sb" style="left:7.0px;top:311.0px;height:74.7px"></div>
<svg class="wv" style="left:7.0px;top:311.0px" width="460" height="90" viewBox="0 0 460 90"><use href="#wArt" fill="none" stroke="#ff0c0c" stroke-width="2.1" stroke-linejoin="round" stroke-linecap="round"/></svg>
<div class="t " style="left:12.4px;top:311.9px;font-size:9.0px;color:#dcdcdc;transform:scaleX(0.950);transform-origin:0 0;">180</div>
<div class="t " style="left:12.4px;top:375.9px;font-size:9.0px;color:#dcdcdc;transform:scaleX(0.950);transform-origin:0 0;">120</div>
<div class="t" style="left:472.6px;top:179.4px;font-size:12px;color:#ffffff;font-weight:bold;-webkit-text-stroke:0.3px #ffffff;transform:scaleX(0.950);transform-origin:0 0">CO2<span class="u">mmHg</span></div>
<div class="t" style="right:calc(100% - 564.6px);top:213.9px;font-size:10.5px;color:#bdbdbd;text-align:right;">Et</div><div class="t" style="right:calc(100% - 613.4px);top:213.9px;font-size:10.5px;color:#bdbdbd;text-align:right;">Fi</div><div class="t" style="right:calc(100% - 563.6px);top:226.8px;font-size:32.0px;color:#ffffff;text-align:right;transform:scaleX(0.907);transform-origin:100% 0;">35</div><div class="t" style="right:calc(100% - 612.0px);top:226.8px;font-size:32.0px;color:#ffffff;text-align:right;transform:scaleX(0.935);transform-origin:100% 0;">0</div>
<div class="t" style="left:472.6px;top:290.3px;font-size:12px;color:#ff0c0c;font-weight:bold;-webkit-text-stroke:0.3px #ff0c0c;transform:scaleX(1.000);transform-origin:0 0">NIBP<span class="u">mmHG</span></div>
<div class="t" style="right:calc(100% - 575.6px);top:332.2px;font-size:32.0px;color:#ff0c0c;text-align:right;transform:scaleX(0.941);transform-origin:100% 0;">120/100</div>
<div class="t" style="right:calc(100% - 612.6px);top:339.7px;font-size:18.0px;color:#ff0c0c;text-align:right;">(70)</div>
<div class="t" style="left:628.4px;top:318.2px;font-size:12px;color:#2ba4ee;font-weight:bold;-webkit-text-stroke:0.3px #2ba4ee;transform:scaleX(0.980);transform-origin:0 0">SpO2<span class="u">%</span></div>
<div class="t" style="right:calc(100% - 768.6px);top:346.1px;font-size:32.0px;color:#2ba4ee;text-align:right;transform:scaleX(0.907);transform-origin:100% 0;">95</div>
</div>
</div>
</div>
<div class="card" style="left:794.0px;top:89.0px">
<div class="body"></div><div class="bd"></div>
<div style="position:absolute;left:-1px;top:0;width:100%;height:100%">
<svg class="wv" style="left:7px;top:7px" width="23.5" height="23.5" viewBox="0 0 22 22"><use href="#icClip"/></svg>
<div class="t " style="left:30.2px;top:10.1px;font-size:15.5px;color:#ffffff;font-weight:bold;transform:scaleX(0.925);transform-origin:0 0;-webkit-text-stroke:0.5px #fff;">OR 4</div>
<svg class="wv" style="left:0;top:0" width="777" height="40"><polygon points="728.30,11.80 730.15,16.25 734.96,16.64 731.30,19.77 732.41,24.46 728.30,21.95 724.19,24.46 725.30,19.77 721.64,16.64 726.45,16.25" fill="#f4f4f4" stroke="#f4f4f4" stroke-width="1" stroke-linejoin="round"/><circle cx="757.6" cy="13.5" r="2" fill="#f4f4f4"/><circle cx="757.6" cy="18.5" r="2" fill="#f4f4f4"/><circle cx="757.6" cy="23.5" r="2" fill="#f4f4f4"/></svg>
<div style="position:absolute;left:0;top:0.0px;width:100%;height:100%">
<div class="t " style="left:6.9px;top:68.6px;font-size:12.5px;color:#1de91d;font-weight:bold;transform:scaleX(0.875);transform-origin:0 0;-webkit-text-stroke:0.35px #1de91d;">ECG II</div>
<div class="sb" style="left:7.0px;top:88.0px;height:75.0px"></div>
<svg class="wv" style="left:7.0px;top:88.0px" width="460" height="90" viewBox="0 0 460 90"><use href="#wEcg2" fill="none" stroke="#1de91d" stroke-width="2" stroke-linejoin="round" stroke-linecap="round"/></svg>
<div class="t " style="left:12.4px;top:121.6px;font-size:8.8px;color:#e2e2e2;">1 mV</div>
<div class="t" style="left:628.4px;top:67.2px;font-size:12px;color:#ffffff;font-weight:bold;-webkit-text-stroke:0.3px #ffffff;transform:scaleX(1.000);transform-origin:0 0">T1<span class="u">&deg;C</span></div>
<div class="t" style="right:calc(100% - 768.6px);top:95.2px;font-size:32.0px;color:#ffffff;text-align:right;transform:scaleX(0.893);transform-origin:100% 0;">37.2</div>
<div class="t" style="left:628.4px;top:151.0px;font-size:12px;color:#ffffff;font-weight:bold;-webkit-text-stroke:0.3px #ffffff;transform:scaleX(1.000);transform-origin:0 0">T2<span class="u">&deg;C</span></div>
<div class="t" style="right:calc(100% - 768.6px);top:178.4px;font-size:32.0px;color:#ffffff;text-align:right;transform:scaleX(0.893);transform-origin:100% 0;">37.1</div>
<div class="t" style="left:628.4px;top:235.1px;font-size:12px;color:#2ba4ee;font-weight:bold;-webkit-text-stroke:0.3px #2ba4ee;transform:scaleX(0.930);transform-origin:0 0">CVP<span class="u">mmHG</span></div>
<div class="t" style="right:calc(100% - 768.6px);top:263.2px;font-size:32.0px;color:#2ba4ee;text-align:right;transform:scaleX(0.907);transform-origin:100% 0;">12</div>
<div class="t" style="left:472.6px;top:67.2px;font-size:12px;color:#1de91d;font-weight:bold;-webkit-text-stroke:0.3px #1de91d;transform:scaleX(1.000);transform-origin:0 0">HR<span class="u">/min</span></div>
<div class="t" style="right:calc(100% - 612.6px);top:109.4px;font-size:32.0px;color:#1de91d;text-align:right;transform:scaleX(0.907);transform-origin:100% 0;">90</div>
<div class="t " style="left:7.3px;top:180.8px;font-size:12.5px;color:#2ba4ee;font-weight:bold;-webkit-text-stroke:0.35px #2ba4ee;">Pleth</div>
<div class="sb" style="left:7.0px;top:203.0px;height:68.0px"></div><div class="tk" style="left:7.0px;top:203.0px"></div><div class="tk" style="left:7.0px;top:225.2px"></div><div class="tk" style="left:7.0px;top:247.3px"></div><div class="tk" style="left:7.0px;top:269.5px"></div>
<svg class="wv" style="left:7.0px;top:203.0px" width="460" height="90" viewBox="0 0 460 90"><use href="#wPl" fill="none" stroke="#2ba4ee" stroke-width="1.8" stroke-linejoin="round" stroke-linecap="round"/></svg>
<div class="t " style="left:12.4px;top:232.3px;font-size:9.5px;color:#c4c4c4;-webkit-text-stroke:0.3px #c4c4c4;">5</div>
<div class="t " style="left:7.1px;top:291.5px;font-size:12.5px;color:#ffffff;font-weight:bold;transform:scaleX(0.900);transform-origin:0 0;-webkit-text-stroke:0.35px #fff;">CO2</div>
<div class="sb" style="left:7.0px;top:311.0px;height:74.7px"></div>
<svg class="wv" style="left:7.0px;top:311.0px" width="460" height="90" viewBox="0 0 460 90"><use href="#wCo2b" fill="none" stroke="#ffffff" stroke-width="1.6" stroke-linejoin="round" stroke-linecap="round"/></svg>
<div class="t " style="left:12.2px;top:312.1px;font-size:9.0px;color:#bdbdbd;transform:scaleX(0.950);transform-origin:0 0;">50</div>
<div class="t " style="left:12.2px;top:376.1px;font-size:9.0px;color:#bdbdbd;transform:scaleX(0.950);transform-origin:0 0;">0</div>
<div class="t" style="left:472.6px;top:179.6px;font-size:12px;color:#2ba4ee;font-weight:bold;-webkit-text-stroke:0.3px #2ba4ee;transform:scaleX(0.980);transform-origin:0 0">SpO2<span class="u">%</span></div>
<div class="t" style="right:calc(100% - 612.6px);top:221.4px;font-size:32.0px;color:#2ba4ee;text-align:right;transform:scaleX(0.907);transform-origin:100% 0;">95</div>
<div class="t" style="left:472.6px;top:290.9px;font-size:12px;color:#ffffff;font-weight:bold;-webkit-text-stroke:0.3px #ffffff;transform:scaleX(0.950);transform-origin:0 0">CO2<span class="u">mmHg</span></div>
<div class="t" style="right:calc(100% - 564.6px);top:325.3px;font-size:10.5px;color:#bdbdbd;text-align:right;">Et</div><div class="t" style="right:calc(100% - 613.4px);top:325.3px;font-size:10.5px;color:#bdbdbd;text-align:right;">Fi</div><div class="t" style="right:calc(100% - 563.6px);top:337.9px;font-size:32.0px;color:#ffffff;text-align:right;transform:scaleX(0.907);transform-origin:100% 0;">35</div><div class="t" style="right:calc(100% - 612.0px);top:337.9px;font-size:32.0px;color:#ffffff;text-align:right;transform:scaleX(0.935);transform-origin:100% 0;">0</div>
<div class="t" style="left:628.4px;top:318.2px;font-size:12px;color:#ff0c0c;font-weight:bold;-webkit-text-stroke:0.3px #ff0c0c;transform:scaleX(1.000);transform-origin:0 0">NIBP<span class="u">mmHG</span></div>
<div class="t" style="right:calc(100% - 731.6px);top:346.6px;font-size:32.0px;color:#ff0c0c;text-align:right;transform:scaleX(0.958);transform-origin:100% 0;">90/60</div>
<div class="t" style="right:calc(100% - 768.6px);top:354.1px;font-size:18.0px;color:#ff0c0c;text-align:right;">(70)</div>
</div>
</div>
</div>
<div class="card c1" style="left:10.0px;top:487.0px">
<div class="body"></div><div class="bd"></div>
<div style="position:absolute;left:0px;top:0;width:100%;height:100%">
<svg class="wv" style="left:7px;top:7px" width="23.5" height="23.5" viewBox="0 0 22 22"><use href="#icClip"/></svg>
<div class="t " style="left:30.2px;top:10.1px;font-size:15.5px;color:#ffffff;font-weight:bold;transform:scaleX(0.925);transform-origin:0 0;-webkit-text-stroke:0.5px #fff;">OR 6</div>
<svg class="wv" style="left:0;top:0" width="777" height="40"><polygon points="728.30,11.80 730.15,16.25 734.96,16.64 731.30,19.77 732.41,24.46 728.30,21.95 724.19,24.46 725.30,19.77 721.64,16.64 726.45,16.25" fill="#f4f4f4" stroke="#f4f4f4" stroke-width="1" stroke-linejoin="round"/><circle cx="757.6" cy="13.5" r="2" fill="#f4f4f4"/><circle cx="757.6" cy="18.5" r="2" fill="#f4f4f4"/><circle cx="757.6" cy="23.5" r="2" fill="#f4f4f4"/></svg>
<div style="position:absolute;left:0;top:1.0px;width:100%;height:100%">
<div class="t " style="left:6.9px;top:68.6px;font-size:12.5px;color:#1de91d;font-weight:bold;transform:scaleX(0.875);transform-origin:0 0;-webkit-text-stroke:0.35px #1de91d;">ECG II</div>
<div class="sb" style="left:7.0px;top:88.0px;height:75.0px"></div>
<svg class="wv" style="left:7.0px;top:88.0px" width="460" height="90" viewBox="0 0 460 90"><use href="#wEcg" fill="none" stroke="#1de91d" stroke-width="2" stroke-linejoin="round" stroke-linecap="round"/></svg>
<div class="t " style="left:12.4px;top:121.6px;font-size:8.8px;color:#e2e2e2;">1 mV</div>
<div class="t" style="left:628.4px;top:67.2px;font-size:12px;color:#ffffff;font-weight:bold;-webkit-text-stroke:0.3px #ffffff;transform:scaleX(1.000);transform-origin:0 0">T1<span class="u">&deg;C</span></div>
<div class="t" style="right:calc(100% - 768.6px);top:95.2px;font-size:32.0px;color:#ffffff;text-align:right;transform:scaleX(0.893);transform-origin:100% 0;">37.2</div>
<div class="t" style="left:628.4px;top:151.0px;font-size:12px;color:#ffffff;font-weight:bold;-webkit-text-stroke:0.3px #ffffff;transform:scaleX(1.000);transform-origin:0 0">T2<span class="u">&deg;C</span></div>
<div class="t" style="right:calc(100% - 768.6px);top:178.4px;font-size:32.0px;color:#ffffff;text-align:right;transform:scaleX(0.893);transform-origin:100% 0;">37.1</div>
<div class="t" style="left:628.4px;top:235.1px;font-size:12px;color:#2ba4ee;font-weight:bold;-webkit-text-stroke:0.3px #2ba4ee;transform:scaleX(0.930);transform-origin:0 0">CVP<span class="u">mmHG</span></div>
<div class="t" style="right:calc(100% - 768.6px);top:263.2px;font-size:32.0px;color:#2ba4ee;text-align:right;transform:scaleX(0.907);transform-origin:100% 0;">12</div>
<div class="t" style="left:472.6px;top:67.2px;font-size:12px;color:#1de91d;font-weight:bold;-webkit-text-stroke:0.3px #1de91d;transform:scaleX(1.000);transform-origin:0 0">HR<span class="u">/min</span></div>
<div class="t" style="right:calc(100% - 612.6px);top:109.4px;font-size:32.0px;color:#1de91d;text-align:right;transform:scaleX(0.907);transform-origin:100% 0;">90</div>
<div class="t " style="left:7.3px;top:180.8px;font-size:12.5px;color:#2ba4ee;font-weight:bold;-webkit-text-stroke:0.35px #2ba4ee;">Pleth</div>
<div class="sb" style="left:7.0px;top:203.0px;height:68.0px"></div><div class="tk" style="left:7.0px;top:203.0px"></div><div class="tk" style="left:7.0px;top:225.2px"></div><div class="tk" style="left:7.0px;top:247.3px"></div><div class="tk" style="left:7.0px;top:269.5px"></div>
<svg class="wv" style="left:7.0px;top:203.0px" width="460" height="90" viewBox="0 0 460 90"><use href="#wPl" fill="none" stroke="#2ba4ee" stroke-width="1.8" stroke-linejoin="round" stroke-linecap="round"/></svg>
<div class="t " style="left:12.4px;top:232.3px;font-size:9.5px;color:#c4c4c4;-webkit-text-stroke:0.3px #c4c4c4;">5</div>
<div class="t " style="left:7.1px;top:291.5px;font-size:12.5px;color:#ffffff;font-weight:bold;transform:scaleX(0.900);transform-origin:0 0;-webkit-text-stroke:0.35px #fff;">CO2</div>
<div class="sb" style="left:7.0px;top:311.0px;height:74.7px"></div>
<svg class="wv" style="left:7.0px;top:311.0px" width="460" height="90" viewBox="0 0 460 90"><use href="#wCo2b" fill="none" stroke="#ffffff" stroke-width="1.6" stroke-linejoin="round" stroke-linecap="round"/></svg>
<div class="t " style="left:12.2px;top:312.1px;font-size:9.0px;color:#bdbdbd;transform:scaleX(0.950);transform-origin:0 0;">50</div>
<div class="t " style="left:12.2px;top:376.1px;font-size:9.0px;color:#bdbdbd;transform:scaleX(0.950);transform-origin:0 0;">0</div>
<div class="t" style="left:472.6px;top:179.6px;font-size:12px;color:#2ba4ee;font-weight:bold;-webkit-text-stroke:0.3px #2ba4ee;transform:scaleX(0.980);transform-origin:0 0">SpO2<span class="u">%</span></div>
<div class="t" style="right:calc(100% - 612.6px);top:221.4px;font-size:32.0px;color:#2ba4ee;text-align:right;transform:scaleX(0.907);transform-origin:100% 0;">95</div>
<div class="t" style="left:472.6px;top:290.9px;font-size:12px;color:#ffffff;font-weight:bold;-webkit-text-stroke:0.3px #ffffff;transform:scaleX(0.950);transform-origin:0 0">CO2<span class="u">mmHg</span></div>
<div class="t" style="right:calc(100% - 564.6px);top:325.3px;font-size:10.5px;color:#bdbdbd;text-align:right;">Et</div><div class="t" style="right:calc(100% - 613.4px);top:325.3px;font-size:10.5px;color:#bdbdbd;text-align:right;">Fi</div><div class="t" style="right:calc(100% - 563.6px);top:337.9px;font-size:32.0px;color:#ffffff;text-align:right;transform:scaleX(0.907);transform-origin:100% 0;">35</div><div class="t" style="right:calc(100% - 612.0px);top:337.9px;font-size:32.0px;color:#ffffff;text-align:right;transform:scaleX(0.935);transform-origin:100% 0;">0</div>
<div class="t" style="left:628.4px;top:318.2px;font-size:12px;color:#ff0c0c;font-weight:bold;-webkit-text-stroke:0.3px #ff0c0c;transform:scaleX(1.000);transform-origin:0 0">NIBP<span class="u">mmHG</span></div>
<div class="t" style="right:calc(100% - 731.6px);top:346.6px;font-size:32.0px;color:#ff0c0c;text-align:right;transform:scaleX(0.958);transform-origin:100% 0;">90/60</div>
<div class="t" style="right:calc(100% - 768.6px);top:354.1px;font-size:18.0px;color:#ff0c0c;text-align:right;">(70)</div>
</div>
</div>
</div>
<div class="card" style="left:794.0px;top:487.0px">
<div class="body"></div><div class="bd"></div>
<div style="position:absolute;left:-1px;top:0;width:100%;height:100%">
<svg class="wv" style="left:7px;top:7px" width="23.5" height="23.5" viewBox="0 0 22 22"><use href="#icClip"/></svg>
<div class="t " style="left:30.2px;top:10.1px;font-size:15.5px;color:#ffffff;font-weight:bold;transform:scaleX(0.925);transform-origin:0 0;-webkit-text-stroke:0.5px #fff;">OR 8</div>
<svg class="wv" style="left:0;top:0" width="777" height="40"><polygon points="728.30,11.80 730.15,16.25 734.96,16.64 731.30,19.77 732.41,24.46 728.30,21.95 724.19,24.46 725.30,19.77 721.64,16.64 726.45,16.25" fill="#f4f4f4" stroke="#f4f4f4" stroke-width="1" stroke-linejoin="round"/><circle cx="757.6" cy="13.5" r="2" fill="#f4f4f4"/><circle cx="757.6" cy="18.5" r="2" fill="#f4f4f4"/><circle cx="757.6" cy="23.5" r="2" fill="#f4f4f4"/></svg>
<div style="position:absolute;left:0;top:1.0px;width:100%;height:100%">
<div class="t " style="left:6.9px;top:68.6px;font-size:12.5px;color:#1de91d;font-weight:bold;transform:scaleX(0.875);transform-origin:0 0;-webkit-text-stroke:0.35px #1de91d;">ECG II</div>
<div class="sb" style="left:7.0px;top:88.0px;height:75.0px"></div>
<svg class="wv" style="left:7.0px;top:88.0px" width="460" height="90" viewBox="0 0 460 90"><use href="#wEcg2" fill="none" stroke="#1de91d" stroke-width="2" stroke-linejoin="round" stroke-linecap="round"/></svg>
<div class="t " style="left:12.4px;top:121.6px;font-size:8.8px;color:#e2e2e2;">1 mV</div>
<div class="t" style="left:628.4px;top:67.2px;font-size:12px;color:#ffffff;font-weight:bold;-webkit-text-stroke:0.3px #ffffff;transform:scaleX(1.000);transform-origin:0 0">T1<span class="u">&deg;C</span></div>
<div class="t" style="right:calc(100% - 768.6px);top:95.2px;font-size:32.0px;color:#ffffff;text-align:right;transform:scaleX(0.893);transform-origin:100% 0;">37.2</div>
<div class="t" style="left:628.4px;top:151.0px;font-size:12px;color:#ffffff;font-weight:bold;-webkit-text-stroke:0.3px #ffffff;transform:scaleX(1.000);transform-origin:0 0">T2<span class="u">&deg;C</span></div>
<div class="t" style="right:calc(100% - 768.6px);top:178.4px;font-size:32.0px;color:#ffffff;text-align:right;transform:scaleX(0.893);transform-origin:100% 0;">37.1</div>
<div class="t" style="left:628.4px;top:235.1px;font-size:12px;color:#2ba4ee;font-weight:bold;-webkit-text-stroke:0.3px #2ba4ee;transform:scaleX(0.930);transform-origin:0 0">CVP<span class="u">mmHG</span></div>
<div class="t" style="right:calc(100% - 768.6px);top:263.2px;font-size:32.0px;color:#2ba4ee;text-align:right;transform:scaleX(0.907);transform-origin:100% 0;">12</div>
<div class="t" style="left:472.6px;top:67.2px;font-size:12px;color:#1de91d;font-weight:bold;-webkit-text-stroke:0.3px #1de91d;transform:scaleX(1.000);transform-origin:0 0">HR<span class="u">/min</span></div>
<div class="t" style="right:calc(100% - 612.6px);top:109.4px;font-size:32.0px;color:#1de91d;text-align:right;transform:scaleX(0.907);transform-origin:100% 0;">90</div>
<div class="t " style="left:7.3px;top:180.8px;font-size:12.5px;color:#2ba4ee;font-weight:bold;-webkit-text-stroke:0.35px #2ba4ee;">Pleth</div>
<div class="sb" style="left:7.0px;top:203.0px;height:68.0px"></div><div class="tk" style="left:7.0px;top:203.0px"></div><div class="tk" style="left:7.0px;top:225.2px"></div><div class="tk" style="left:7.0px;top:247.3px"></div><div class="tk" style="left:7.0px;top:269.5px"></div>
<svg class="wv" style="left:7.0px;top:203.0px" width="460" height="90" viewBox="0 0 460 90"><use href="#wPl" fill="none" stroke="#2ba4ee" stroke-width="1.8" stroke-linejoin="round" stroke-linecap="round"/></svg>
<div class="t " style="left:12.4px;top:232.3px;font-size:9.5px;color:#c4c4c4;-webkit-text-stroke:0.3px #c4c4c4;">5</div>
<div class="t " style="left:7.1px;top:291.5px;font-size:12.5px;color:#ffffff;font-weight:bold;transform:scaleX(0.900);transform-origin:0 0;-webkit-text-stroke:0.35px #fff;">CO2</div>
<div class="sb" style="left:7.0px;top:311.0px;height:74.7px"></div>
<svg class="wv" style="left:7.0px;top:311.0px" width="460" height="90" viewBox="0 0 460 90"><use href="#wCo2b" fill="none" stroke="#ffffff" stroke-width="1.6" stroke-linejoin="round" stroke-linecap="round"/></svg>
<div class="t " style="left:12.2px;top:312.1px;font-size:9.0px;color:#bdbdbd;transform:scaleX(0.950);transform-origin:0 0;">50</div>
<div class="t " style="left:12.2px;top:376.1px;font-size:9.0px;color:#bdbdbd;transform:scaleX(0.950);transform-origin:0 0;">0</div>
<div class="t" style="left:472.6px;top:179.6px;font-size:12px;color:#2ba4ee;font-weight:bold;-webkit-text-stroke:0.3px #2ba4ee;transform:scaleX(0.980);transform-origin:0 0">SpO2<span class="u">%</span></div>
<div class="t" style="right:calc(100% - 612.6px);top:221.4px;font-size:32.0px;color:#2ba4ee;text-align:right;transform:scaleX(0.907);transform-origin:100% 0;">95</div>
<div class="t" style="left:472.6px;top:290.9px;font-size:12px;color:#ffffff;font-weight:bold;-webkit-text-stroke:0.3px #ffffff;transform:scaleX(0.950);transform-origin:0 0">CO2<span class="u">mmHg</span></div>
<div class="t" style="right:calc(100% - 564.6px);top:325.3px;font-size:10.5px;color:#bdbdbd;text-align:right;">Et</div><div class="t" style="right:calc(100% - 613.4px);top:325.3px;font-size:10.5px;color:#bdbdbd;text-align:right;">Fi</div><div class="t" style="right:calc(100% - 563.6px);top:337.9px;font-size:32.0px;color:#ffffff;text-align:right;transform:scaleX(0.907);transform-origin:100% 0;">35</div><div class="t" style="right:calc(100% - 612.0px);top:337.9px;font-size:32.0px;color:#ffffff;text-align:right;transform:scaleX(0.935);transform-origin:100% 0;">0</div>
<div class="t" style="left:628.4px;top:318.2px;font-size:12px;color:#ff0c0c;font-weight:bold;-webkit-text-stroke:0.3px #ff0c0c;transform:scaleX(1.000);transform-origin:0 0">NIBP<span class="u">mmHG</span></div>
<div class="t" style="right:calc(100% - 731.6px);top:346.6px;font-size:32.0px;color:#ff0c0c;text-align:right;transform:scaleX(0.958);transform-origin:100% 0;">90/60</div>
<div class="t" style="right:calc(100% - 768.6px);top:354.1px;font-size:18.0px;color:#ff0c0c;text-align:right;">(70)</div>
</div>
</div>
</div>
</body></html>
